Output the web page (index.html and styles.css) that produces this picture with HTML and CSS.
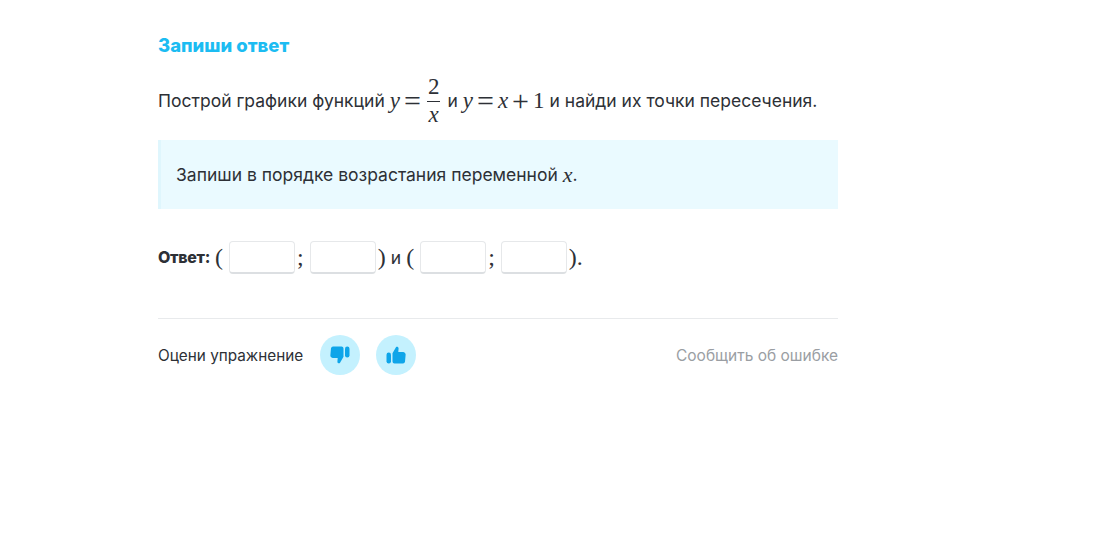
FILE: index.html
```html
<!DOCTYPE html>
<html lang="ru">
<head>
<meta charset="utf-8">
<title>Запиши ответ</title>
<link rel="stylesheet" href="styles.css">
</head>
<body>
<main class="page">
  <h1 class="title">Запиши ответ</h1>
  <p class="task">
    <span>Построй графики функций</span>
    <span class="math"><i>y</i><span class="op">=</span><span class="frac"><span class="num">2</span><span class="den"><i>x</i></span></span></span>
    <span>и</span>
    <span class="math"><i>y</i><span class="op">=</span><i>x</i><span class="op">+</span>1</span>
    <span>и найди их точки пересечения.</span>
  </p>
  <div class="note">Запиши в порядке возрастания переменной <span class="math"><i>x</i></span>.</div>
  <div class="answer">
    <b class="label">Ответ:</b>
    <span class="paren">(</span>
    <span class="box"></span><span class="sep">;</span><span class="box"></span>
    <span class="paren">)</span>
    <span class="and">и</span>
    <span class="paren">(</span>
    <span class="box"></span><span class="sep">;</span><span class="box"></span>
    <span class="paren">).</span>
  </div>
  <footer class="rate">
    <span class="rate-label">Оцени упражнение</span>
    <span class="btn"><svg width="20" height="20" viewBox="0 0 20 20"><rect x="15" y="1.500" width="4.500" height="11" rx="2.200" fill="#0ea5e9"/><path d="M3 1.500h8.500a2 2 0 0 1 2 2v8.200l-3.600 6.200c-.5.9-2.600.5-2.500-1.200l.3-3.700H3a2.600 2.600 0 0 1-2.600-3l.6-6.700a2.400 2.400 0 0 1 2-1.800z" fill="#0ea5e9"/></svg></span>
    <span class="btn"><svg width="20" height="20" viewBox="0 0 20 20"><rect x=".5" y="7.500" width="4.500" height="11" rx="2.200" fill="#0ea5e9"/><path d="M17 18.500H8.500a2 2 0 0 1-2-2V8.300l3.600-6.200c.5-.9 2.600-.5 2.500 1.200l-.3 3.700H17a2.600 2.600 0 0 1 2.600 3l-.6 6.700a2.400 2.400 0 0 1-2 1.800z" fill="#0ea5e9"/></svg></span>
    <span class="report">Сообщить об ошибке</span>
  </footer>
</main>
</body>
</html>
```
FILE: styles.css
```css
html, body { margin: 0; padding: 0; background: #fff; }
body { font-family: "Inter", "Noto Sans", sans-serif; color: #2d3036; }
.page { width: 680px; margin-left: 158px; padding-top: 34px; }
.title { margin: 0; font-size: 18.500px; line-height: 22px; font-weight: 800; color: #1cbcf2; }
.task { margin: 8px 0 0; height: 73px; display: flex; align-items: center; gap: 5px; font-size: 17.500px; white-space: nowrap; }
.math { font-family: "Liberation Serif", serif; font-size: 23px; display: inline-flex; align-items: center; }
.op { margin: 0 4px; font-size: 30px; line-height: 23px; font-weight: 400; }
.frac { display: inline-flex; flex-direction: column; align-items: center; margin: 0 1px; }
.num { padding: 0 2px 2px; line-height: 24px; }
.den { border-top: 1px solid #2d3036; padding-top: 2px; line-height: 22px; width: 13px; text-align: center; }
.note { margin-top: 3px; height: 69px; box-sizing: border-box; background: #eafaff; border-left: 3px solid #dff6fd; padding-left: 15px; display: flex; align-items: center; font-size: 17.500px; white-space: pre; }
.note .math { font-size: 22px; }
.answer { margin-top: 31px; display: flex; align-items: center; height: 34px; font-size: 17.500px; }
.label { font-size: 16px; font-weight: 800; letter-spacing: -.3px; margin-right: 5px; }
.paren, .sep { font-family: "Liberation Serif", serif; font-size: 24px; font-weight: 400; }
.box { width: 64px; height: 30px; background: #fff; border: 1px solid #e6e8ea; border-bottom: 2px solid #dcdfe2; border-radius: 4px; margin: 0 2px 0 6px; }
.and { margin: 0 5px; }
.rate { margin-top: 44px; border-top: 1px solid #e8eaec; height: 72px; display: flex; align-items: center; font-size: 15.300px; }
.rate-label { margin-right: 17px; }
.btn { width: 40px; height: 40px; border-radius: 50%; background: #c4f1fe; display: flex; align-items: center; justify-content: center; margin-right: 16px; }
.report { margin-left: auto; color: #9a9ea3; font-size: 15.500px; }
```
